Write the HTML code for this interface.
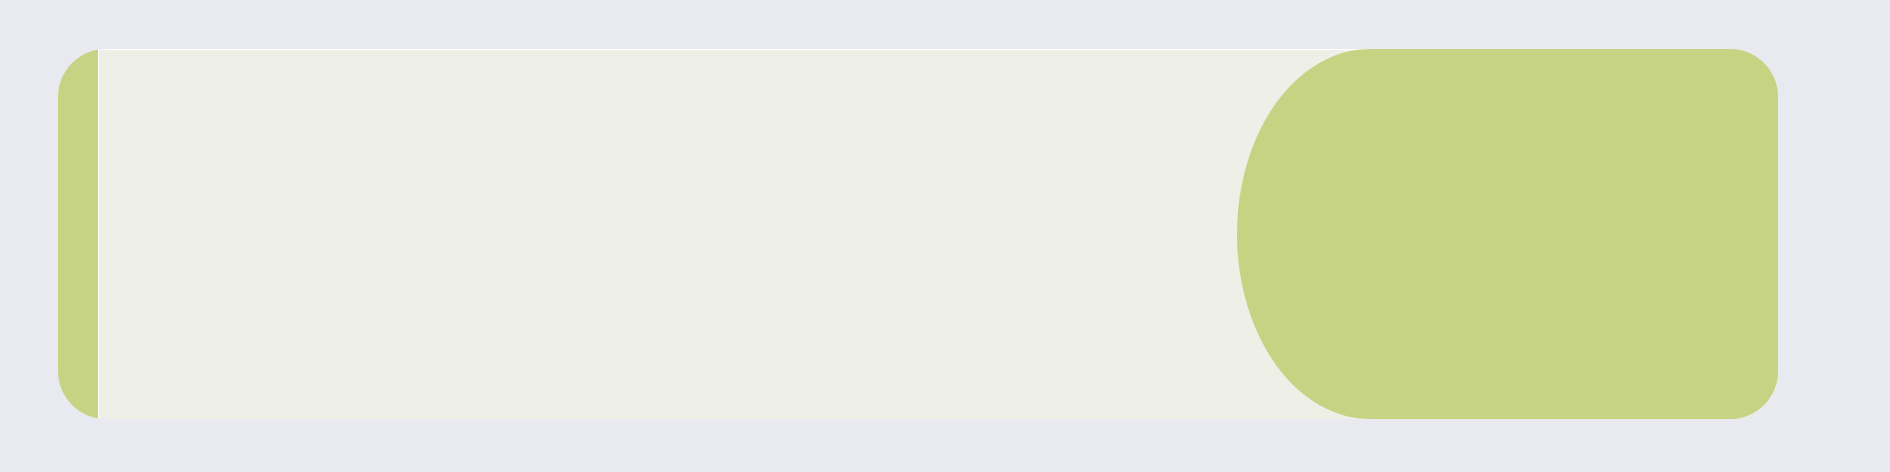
<!DOCTYPE html>
<html><head><style>
html,body{margin:0;padding:0;width:1890px;height:472px;background:#e9eaef;overflow:hidden}
.card{position:absolute;left:58px;top:49px;width:1720px;height:370px;background:#c6d382;border-radius:48px;overflow:hidden}
.panel{position:absolute;left:40px;top:0;width:1330px;height:370px;background:#eeefe7;border-top:1px solid #fff;border-left:1px solid #fff;box-sizing:border-box}
.ell{position:absolute;left:1179px;top:0;width:266px;height:370px;border-radius:50%;background:#c6d382}
.rest{position:absolute;left:1312px;top:0;right:0;height:370px;background:#c6d382}
</style></head><body>
<div class="card"><div class="panel"></div><div class="ell"></div><div class="rest"></div></div>
</body></html>
